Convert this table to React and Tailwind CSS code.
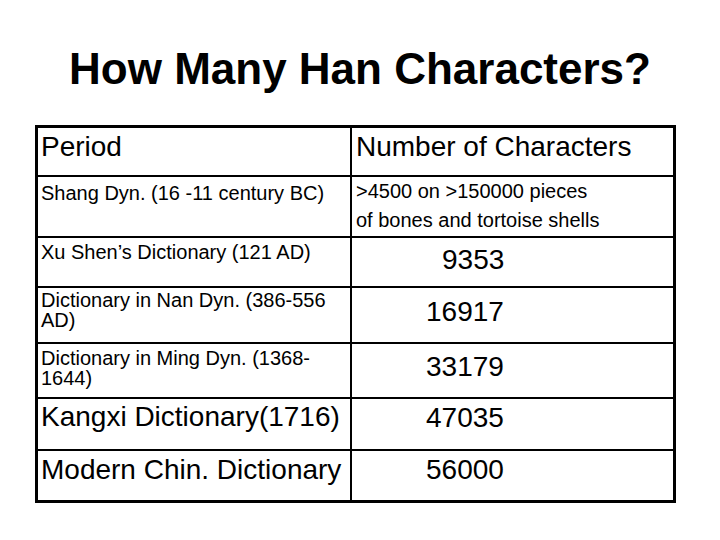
const rows = [
  {
    h: "h-[47px]",
    left: <div className="pl-[3px] pt-[3px] text-[28px] leading-[32px]">Period</div>,
    right: <div className="pl-[4px] pt-[3px] text-[28px] leading-[32px]">Number of Characters</div>,
  },
  {
    h: "h-[61px] border-t-2",
    left: <div className="pl-[3px] pt-[4px] text-[20px] leading-[24px]">Shang Dyn. (16 -11 century BC)</div>,
    right: (
      <div className="pl-[4px] pt-[0px] text-[20px] leading-[29px]">
        &gt;4500 on &gt;150000 pieces
        <br />
        of bones and tortoise shells
      </div>
    ),
  },
  {
    h: "h-[50px] border-t-2",
    left: <div className="pl-[3px] pt-[2px] text-[20px] leading-[24px]">Xu Shen’s Dictionary (121 AD)</div>,
    right: <div className="pl-[90px] pt-[6px] text-[28px] leading-[32px]">9353</div>,
  },
  {
    h: "h-[56px] border-t-2",
    left: (
      <div className="pl-[3px] pt-[2px] text-[20px] leading-[20px]">
        Dictionary in Nan Dyn. (386-556
        <br />
        AD)
      </div>
    ),
    right: <div className="pl-[74px] pt-[8px] text-[28px] leading-[32px]">16917</div>,
  },
  {
    h: "h-[55px] border-t-2",
    left: (
      <div className="pl-[3px] pt-[4px] text-[20px] leading-[20px]">
        Dictionary in Ming Dyn. (1368-
        <br />
        1644)
      </div>
    ),
    right: <div className="pl-[74px] pt-[7px] text-[28px] leading-[32px]">33179</div>,
  },
  {
    h: "h-[52px] border-t-2",
    left: <div className="pl-[3px] pt-[2px] text-[28px] leading-[32px]">Kangxi Dictionary(1716)</div>,
    right: <div className="pl-[74px] pt-[3px] text-[28px] leading-[32px]">47035</div>,
  },
  {
    h: "h-[51px] border-t-2",
    left: <div className="pl-[3px] pt-[3px] text-[28px] leading-[32px]">Modern Chin. Dictionary</div>,
    right: <div className="pl-[74px] pt-[3px] text-[28px] leading-[32px]">56000</div>,
  },
];

export default function App() {
  return (
    <div className="w-[720px] h-[540px] overflow-hidden bg-white text-black font-['Liberation_Sans',Arial,sans-serif]">
      <h1 className="pt-[47px] text-center text-[44px] leading-[44px] font-bold">How Many Han Characters?</h1>

      <div className="ml-[35px] mt-[34px] w-[641px] border-[3px] border-black">
        {rows.map((row, i) => (
          <div key={i} className={`flex border-black ${row.h}`}>
            <div className="w-[314px] shrink-0 border-r-2 border-black overflow-hidden">{row.left}</div>
            <div className="flex-1 overflow-hidden">{row.right}</div>
          </div>
        ))}
      </div>
    </div>
  );
}
